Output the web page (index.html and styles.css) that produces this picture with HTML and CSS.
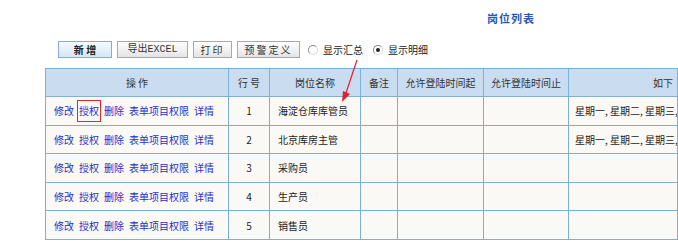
FILE: index.html
```html
<!DOCTYPE html>
<html lang="zh-CN">
<head>
    <meta charset="UTF-8">
    <title>岗位列表</title>
    <link rel="stylesheet" href="styles.css">
</head>
<body>
    <div class="page">
        <div class="title">岗位列表</div>

        <div class="toolbar">
            <button class="btn btn-main">新 增</button>
            <button class="btn btn-excel">导出EXCEL</button>
            <button class="btn btn-print">打印</button>
            <button class="btn btn-warn">预警定义</button>
            <label class="opt"><input type="radio" name="mode" class="radio"> 显示汇总</label>
            <label class="opt"><input type="radio" name="mode" class="radio" checked> 显示明细</label>
        </div>

        <table class="grid">
            <thead>
                <tr>
                    <th class="col-op">操 作</th>
                    <th class="col-no">行 号</th>
                    <th class="col-name">岗位名称</th>
                    <th class="col-memo">备注</th>
                    <th class="col-time">允许登陆时间起</th>
                    <th class="col-time2">允许登陆时间止</th>
                    <th class="col-week">如下</th>
                </tr>
            </thead>
            <tbody>
                <tr>
                    <td class="ops"><a href="#">修改</a><a href="#" class="marked">授权</a><a href="#">删除</a><a href="#">表单项目权限</a><a href="#">详情</a></td>
                    <td class="num">1</td>
                    <td>海淀仓库库管员</td>
                    <td></td><td></td><td></td>
                    <td class="week">星期一, 星期二, 星期三,</td>
                </tr>
                <tr>
                    <td class="ops"><a href="#">修改</a><a href="#">授权</a><a href="#">删除</a><a href="#">表单项目权限</a><a href="#">详情</a></td>
                    <td class="num">2</td>
                    <td>北京库房主管</td>
                    <td></td><td></td><td></td>
                    <td class="week">星期一, 星期二, 星期三,</td>
                </tr>
                <tr>
                    <td class="ops"><a href="#">修改</a><a href="#">授权</a><a href="#">删除</a><a href="#">表单项目权限</a><a href="#">详情</a></td>
                    <td class="num">3</td>
                    <td>采购员</td>
                    <td></td><td></td><td></td><td></td>
                </tr>
                <tr>
                    <td class="ops"><a href="#">修改</a><a href="#">授权</a><a href="#">删除</a><a href="#">表单项目权限</a><a href="#">详情</a></td>
                    <td class="num">4</td>
                    <td>生产员</td>
                    <td></td><td></td><td></td><td></td>
                </tr>
                <tr>
                    <td class="ops"><a href="#">修改</a><a href="#">授权</a><a href="#">删除</a><a href="#">表单项目权限</a><a href="#">详情</a></td>
                    <td class="num">5</td>
                    <td>销售员</td>
                    <td></td><td></td><td></td><td></td>
                </tr>
            </tbody>
        </table>
    </div>

    <!-- 标注箭头 -->
    <svg class="arrow" width="30" height="50" viewBox="0 0 30 50">
        <line x1="22" y1="1" x2="11" y2="34" stroke="#e0202a" stroke-width="1.2"/>
        <polygon points="7,43 8,32 15,35" fill="#e0202a"/>
    </svg>
</body>
</html>
```

FILE: styles.css
```css
html, body {
    overflow: hidden;
}
body {
    margin: 0;
    padding: 0;
    background: #ffffff;
    font-family: "Noto Sans CJK SC", "DejaVu Sans", sans-serif;
    font-size: 10px;
    color: #222;
    position: relative;
    width: 678px;
    height: 245px;
}
.page {
    margin-left: 45px;
    width: 633px;
}
.title {
    padding: 11px 0 0 442px;
    height: 16px;
    line-height: 14px;
    font-size: 11px;
    font-weight: bold;
    letter-spacing: 1px;
    color: #1f5bb5;
}
.toolbar {
    display: flex;
    align-items: center;
    gap: 5px;
    margin-top: 14px;
    padding-left: 13px;
    height: 17px;
}
.btn {
    height: 17px;
    padding: 0;
    font-family: "Noto Sans CJK SC", sans-serif;
    font-size: 10px;
    line-height: 15px;
    color: #333;
    border: 1px solid #a9a9a9;
    background: linear-gradient(#ffffff, #e4e4e4);
    cursor: pointer;
}
.btn-main {
    width: 54px;
    font-weight: bold;
    color: #222;
    border-color: #86acd6;
    background: linear-gradient(#f6fbff, #d4e6f7);
}
.btn-excel {
    width: 71px;
    font-family: "Liberation Mono", "Noto Sans CJK SC", monospace;
}
.btn-print {
    width: 39px;
    letter-spacing: 2px;
}
.btn-warn {
    width: 63px;
    letter-spacing: 2px;
}
.opt {
    display: flex;
    align-items: center;
    gap: 5px;
    margin-left: 3px;
    margin-right: 2px;
    color: #222;
}
.radio {
    appearance: none;
    -webkit-appearance: none;
    margin: 0;
    width: 10px;
    height: 10px;
    border-radius: 50%;
    border: 1px solid #8a8a8a;
    border-right-color: #d8d8d8;
    border-bottom-color: #d8d8d8;
    background: #fff;
    position: relative;
}
.radio:checked::after {
    content: "";
    position: absolute;
    left: 2px;
    top: 2px;
    width: 4px;
    height: 4px;
    border-radius: 50%;
    background: #222;
}
.grid {
    margin-top: 10px;
    border-collapse: collapse;
    table-layout: fixed;
    width: 633px;
    background: #fbf9f5;
}
.grid th,
.grid td {
    border: 1px solid #7eb0d6;
    height: 27.6px;
    padding: 0 0 0 8px;
    white-space: nowrap;
    overflow: hidden;
    text-align: left;
    font-weight: normal;
}
.grid th {
    height: 27px;
    background: #cadcef;
    color: #333;
    text-align: center;
    padding: 0;
}
.col-op { width: 182px; }
.col-no { width: 40px; }
.col-name { width: 90px; }
.col-memo { width: 36px; }
.col-time { width: 85px; }
.col-time2 { width: 84px; }
.grid th.col-week {
    text-align: right;
    padding-right: 4px;
}
.grid td.week {
    padding-left: 6px;
}
.grid td.num {
    text-align: center;
    padding: 0;
}
.ops a {
    color: #2630c4;
    text-decoration: none;
    margin-right: 5px;
}
.ops a.marked {
    display: inline-block;
    border: 1px solid #e02a2a;
    padding: 4px 1px;
    margin: -5px 3px -5px -2px;
    line-height: 12px;
}
.arrow {
    position: absolute;
    left: 335px;
    top: 59px;
}
```
